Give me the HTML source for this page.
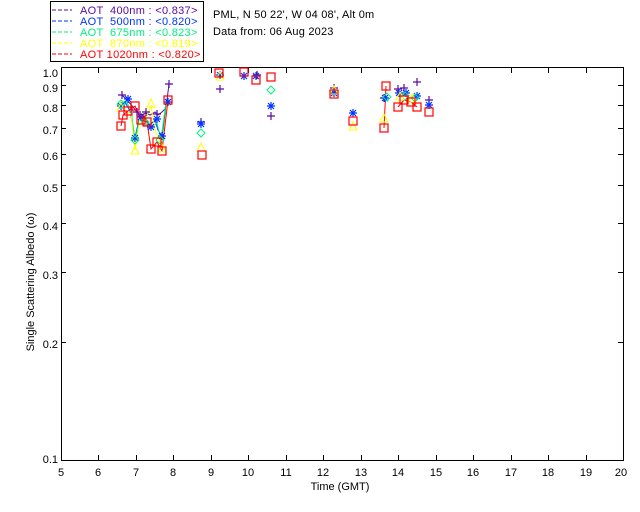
<!DOCTYPE html>
<html><head><meta charset="utf-8"><style>
html,body{margin:0;padding:0;background:#fff;width:640px;height:512px;overflow:hidden}
svg text{font-family:"Liberation Sans",sans-serif;font-size:11px}
.lg{white-space:pre;letter-spacing:0.3px}
</style></head><body>
<svg width="640" height="512" viewBox="0 0 640 512" xmlns="http://www.w3.org/2000/svg">
<defs>
<g id="plus"><path d="M-4 0H4M0 -4V4" stroke-width="1.2"/></g>
<g id="ast"><path d="M-4 0H4M0 -4V4M-3 -3L3 3M-3 3L3 -3" stroke-width="1.2"/></g>
<g id="dia"><path d="M0 -4L4 0L0 4L-4 0Z" fill="none" stroke-width="1"/></g>
<g id="tri"><path d="M0 -4L4 4H-4Z" fill="none" stroke-width="1"/></g>
<g id="sq"><rect x="-4" y="-4" width="8" height="8" fill="none" stroke-width="1.2"/></g>
</defs>
<rect x="50.5" y="1.5" width="153" height="60" fill="none" stroke="#000"/>
<g stroke-dasharray="4,2" stroke-width="1">
<line x1="52" y1="10" x2="72" y2="10" stroke="#5a0aa0"/>
<line x1="52" y1="21" x2="72" y2="21" stroke="#0033ff"/>
<line x1="52" y1="32" x2="72" y2="32" stroke="#00f080"/>
<line x1="52" y1="43" x2="72" y2="43" stroke="#ffff00"/>
<line x1="52" y1="54" x2="72" y2="54" stroke="#ff0000"/>
</g>
<text class="lg" x="80" y="14" fill="#5a0aa0" xml:space="preserve">AOT  400nm : &lt;0.837&gt;</text>
<text class="lg" x="80" y="25" fill="#0033ff" xml:space="preserve">AOT  500nm : &lt;0.820&gt;</text>
<text class="lg" x="80" y="36" fill="#00f080" xml:space="preserve">AOT  675nm : &lt;0.823&gt;</text>
<text class="lg" x="80" y="47" fill="#ffff00" xml:space="preserve">AOT  870nm : &lt;0.819&gt;</text>
<text class="lg" x="80" y="58" fill="#ff0000" xml:space="preserve">AOT 1020nm : &lt;0.820&gt;</text>
<text x="213" y="18" fill="#000" style="letter-spacing:0.2px">PML, N 50 22', W 04 08', Alt 0m</text>
<text x="213" y="35" fill="#000" style="letter-spacing:0.2px">Data from: 06 Aug 2023</text>
<rect x="61.5" y="67.5" width="562" height="393" fill="none" stroke="#000"/>
<g stroke="#000">
<path d="M98.5 461v-6M136.5 461v-6M173.5 461v-6M211.5 461v-6M248.5 461v-6M286.5 461v-6M323.5 461v-6M361.5 461v-6M398.5 461v-6M436.5 461v-6M473.5 461v-6M511.5 461v-6M548.5 461v-6M586.5 461v-6"/>
<path d="M98.5 67v6M136.5 67v6M173.5 67v6M211.5 67v6M248.5 67v6M286.5 67v6M323.5 67v6M361.5 67v6M398.5 67v6M436.5 67v6M473.5 67v6M511.5 67v6M548.5 67v6M586.5 67v6"/>
<path d="M61 85.5h5M61 105.5h5M61 128.5h5M61 154.5h5M61 185.5h5M61 223.5h5M61 272.5h5M61 342.5h5"/>
<path d="M623 85.5h-5M623 105.5h-5M623 128.5h-5M623 154.5h-5M623 185.5h-5M623 223.5h-5M623 272.5h-5M623 342.5h-5"/>
</g>
<g fill="#000" text-anchor="end">
<text x="58" y="77">1.0</text><text x="58" y="92">0.9</text><text x="58" y="112">0.8</text>
<text x="58" y="134">0.7</text><text x="58" y="160">0.6</text><text x="58" y="192">0.5</text>
<text x="58" y="230">0.4</text><text x="58" y="279">0.3</text><text x="58" y="348">0.2</text>
<text x="58" y="463">0.1</text>
</g>
<g fill="#000" text-anchor="middle">
<text x="61" y="476">5</text><text x="98" y="476">6</text><text x="136" y="476">7</text><text x="173" y="476">8</text>
<text x="211" y="476">9</text><text x="248" y="476">10</text><text x="286" y="476">11</text><text x="323" y="476">12</text>
<text x="361" y="476">13</text><text x="398" y="476">14</text><text x="436" y="476">15</text><text x="473" y="476">16</text>
<text x="511" y="476">17</text><text x="548" y="476">18</text><text x="586" y="476">19</text><text x="621" y="476">20</text>
<text x="340" y="490">Time (GMT)</text>
</g>
<text x="34" y="282" fill="#000" text-anchor="middle" transform="rotate(-90 34 282)">Single Scattering Albedo (ω)</text>
<g fill="none" stroke-width="1">
<polyline stroke="#5a0aa0" points="122,95 127,100 133,107 137,112 141,115 146,113 150,115 155,112 158,115 162,112 166,108 169,84"/>
<polyline stroke="#0033ff" points="121,105 125,102 130,111 135,138 140,115 144,117 150,125 155,120 158,130 162,136 167,102"/>
<polyline stroke="#00f080" points="121,103 126,101 131,110 135,140 140,118 146,120 151,128 157,123 161,140 166,102"/>
<polyline stroke="#ffff00" points="121,105 125,110 131,114 135,150 140,118 145,120 151,106 155,130 159,140 162,147 167,104"/>
<polyline stroke="#ff0000" points="121,126 123,115 128,111 135,106 141,120 147,122 151,149 157,142 162,151 168,100"/>
<polyline stroke="#ff0000" points="384,128 386,86"/>
<polyline stroke="#ff0000" points="398,107 404,100 411,102 417,107"/>
</g>
<g stroke="#5a0aa0">
<use href="#plus" x="122" y="95"/><use href="#plus" x="137" y="112"/><use href="#plus" x="146" y="112"/><use href="#plus" x="157" y="114"/><use href="#plus" x="169" y="84"/>
<use href="#plus" x="201" y="122"/><use href="#plus" x="220" y="89"/><use href="#plus" x="271" y="116"/><use href="#plus" x="257" y="75"/>
<use href="#plus" x="334" y="88"/><use href="#plus" x="398" y="89"/><use href="#plus" x="404" y="88"/><use href="#plus" x="417" y="82"/><use href="#plus" x="429" y="100"/><use href="#plus" x="384" y="98"/>
</g>
<g stroke="#0033ff">
<use href="#ast" x="121" y="106"/><use href="#ast" x="128" y="99"/><use href="#ast" x="135" y="138"/><use href="#ast" x="141" y="117"/><use href="#ast" x="151" y="127"/><use href="#ast" x="157" y="119"/><use href="#ast" x="162" y="136"/><use href="#ast" x="168" y="102"/>
<use href="#ast" x="201" y="124"/><use href="#ast" x="220" y="75"/><use href="#ast" x="244" y="76"/><use href="#ast" x="256" y="76"/><use href="#ast" x="271" y="106"/>
<use href="#ast" x="334" y="93"/><use href="#ast" x="353" y="113"/><use href="#ast" x="385" y="98"/><use href="#ast" x="399" y="93"/><use href="#ast" x="406" y="93"/><use href="#ast" x="417" y="96"/><use href="#ast" x="429" y="105"/>
</g>
<g stroke="#00f080">
<use href="#dia" x="121" y="104"/><use href="#dia" x="135" y="140"/><use href="#dia" x="145" y="122"/><use href="#dia" x="160" y="140"/><use href="#dia" x="201" y="133"/><use href="#dia" x="271" y="90"/><use href="#dia" x="387" y="97"/><use href="#dia" x="405" y="96"/><use href="#dia" x="415" y="98"/>
</g>
<g stroke="#ffff00">
<use href="#tri" x="121" y="107"/><use href="#tri" x="135" y="150"/><use href="#tri" x="151" y="103"/><use href="#tri" x="162" y="148"/><use href="#tri" x="201" y="147"/><use href="#tri" x="220" y="76"/><use href="#tri" x="334" y="90"/><use href="#tri" x="353" y="126"/><use href="#tri" x="384" y="118"/><use href="#tri" x="400" y="96"/><use href="#tri" x="412" y="98"/>
</g>
<g stroke="#ff0000">
<use href="#sq" x="121" y="126"/><use href="#sq" x="123" y="115"/><use href="#sq" x="128" y="111"/><use href="#sq" x="135" y="106"/><use href="#sq" x="141" y="120"/><use href="#sq" x="147" y="122"/><use href="#sq" x="151" y="149"/><use href="#sq" x="157" y="142"/><use href="#sq" x="162" y="151"/><use href="#sq" x="168" y="100"/>
<use href="#sq" x="202" y="155"/><use href="#sq" x="219" y="73"/><use href="#sq" x="244" y="72"/><use href="#sq" x="256" y="80"/><use href="#sq" x="271" y="77"/>
<use href="#sq" x="334" y="94"/><use href="#sq" x="353" y="121"/><use href="#sq" x="386" y="86"/><use href="#sq" x="384" y="128"/><use href="#sq" x="398" y="107"/><use href="#sq" x="404" y="100"/><use href="#sq" x="411" y="102"/><use href="#sq" x="417" y="107"/><use href="#sq" x="429" y="112"/>
</g>
</svg>
</body></html>
